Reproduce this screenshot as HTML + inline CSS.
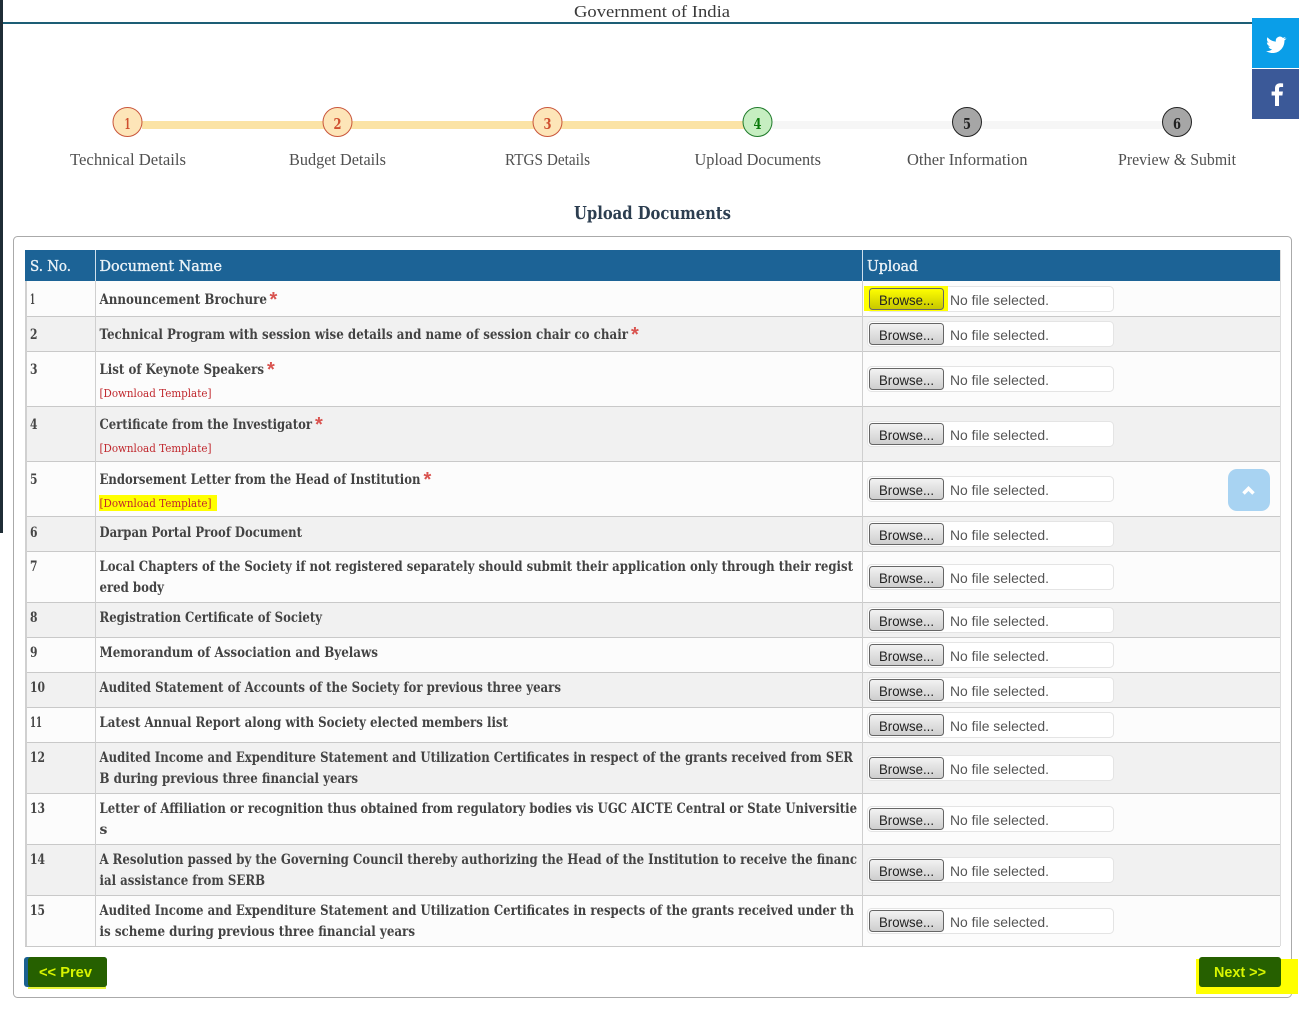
<!DOCTYPE html>
<html><head><meta charset="utf-8"><title>Upload Documents</title>
<style>
html,body{margin:0;padding:0;background:#fff;width:1299px;height:1030px;overflow:hidden}
svg{display:block;position:absolute;left:0;top:0}
.t{font-family:"DejaVu Serif","Liberation Serif",serif;font-weight:bold;font-size:14px;fill:#434343}
.l{font-family:"Liberation Serif",serif;font-size:17px;fill:#505050}
.h{font-family:"DejaVu Serif","Liberation Serif",serif;font-size:14.5px;fill:#eaf2f7;stroke:#eaf2f7;stroke-width:.35}
.d{font-family:"DejaVu Serif","Liberation Serif",serif;font-size:11px;fill:#c0272d}
.n{font-family:"DejaVu Serif","Liberation Serif",serif;font-weight:bold;font-size:14px}
.c{font-family:"DejaVu Serif","Liberation Serif",serif;font-weight:bold;font-size:15px}
.s{font-family:"Liberation Sans",sans-serif;font-weight:bold;font-size:20px;fill:#d9534f}
.b{font-family:"Liberation Sans",sans-serif;font-size:14px;fill:#222}
.f{font-family:"Liberation Sans",sans-serif;font-size:14px;fill:#555}
.g{font-family:"Liberation Sans",sans-serif;font-weight:bold;font-size:14.500px;fill:#d8f500}
.box{fill:#fff;stroke:#e4e4e4}
.btn{fill:url(#bg);stroke:#666}
</style></head><body>
<svg width="1299" height="1030" viewBox="0 0 1299 1030" xmlns="http://www.w3.org/2000/svg">
<defs>
<linearGradient id="bg" x1="0" y1="0" x2="0" y2="1"><stop offset="0" stop-color="#f3f3f3"/><stop offset="1" stop-color="#cdcdcd"/></linearGradient>
<linearGradient id="by" x1="0" y1="0" x2="0" y2="1"><stop offset="0" stop-color="#ffff00"/><stop offset="1" stop-color="#c6c600"/></linearGradient>
</defs>
<rect x="0" y="0" width="3" height="533" fill="#1f2d36"/>
<rect x="3" y="22" width="1249" height="2" fill="#1d5e75"/>
<text x="574" y="17" class="l" style="fill:#3a3a3a" textLength="156" lengthAdjust="spacingAndGlyphs">Government of India</text>

<rect x="1252" y="18" width="47" height="50" fill="#0a9ee8"/>
<rect x="1252" y="69" width="47" height="50" fill="#3b5998"/>
<path d="M1286 38.5c-.7.3-1.5.5-2.300.6.800-.500 1.500-1.300 1.800-2.200-.800.500-1.700.800-2.600 1a4.100 4.100 0 0 0-7 3.700c-3.400-.2-6.400-1.800-8.400-4.300-1.100 1.900-.5 4.300 1.300 5.500-.7 0-1.300-.2-1.900-.5 0 2 1.400 3.700 3.300 4.100-.6.200-1.200.2-1.800.1.500 1.600 2 2.800 3.800 2.800-1.800 1.400-4 2-6.100 1.800 1.900 1.200 4.100 1.900 6.400 1.900 7.800 0 12.200-6.600 11.900-12.500.8-.6 1.500-1.300 2.100-2z" fill="#fff"/>
<path d="M1279 106v-10.500h3.400l.5-4h-3.900v-2.600c0-1.200.3-1.900 2-1.900h2.100v-3.600c-.4 0-1.600-.2-3-.2-3 0-5.100 1.800-5.100 5.200v3.100h-3.400v4h3.400V106z" fill="#fff"/>

<rect x="142" y="121" width="610" height="8" fill="#fbe3a5"/>
<rect x="772" y="121" width="392" height="8" fill="#f6f6f6"/>
<circle cx="127.500" cy="122" r="14.500" fill="#fde5b8" stroke="#c9553a"/>
<circle cx="337.500" cy="122" r="14.500" fill="#fde5b8" stroke="#c9553a"/>
<circle cx="547.500" cy="122" r="14.500" fill="#fde5b8" stroke="#c9553a"/>
<circle cx="757.500" cy="122" r="14.500" fill="#c6eec1" stroke="#1f7a2a"/>
<circle cx="967" cy="122" r="14.500" fill="#a6a6a6" stroke="#222"/>
<circle cx="1177" cy="122" r="14.500" fill="#a6a6a6" stroke="#222"/>
<text x="124.500" y="129" class="c" fill="#cf4f2f" textLength="6" lengthAdjust="spacingAndGlyphs">1</text>
<text x="333.500" y="129" class="c" fill="#cf4f2f" textLength="8" lengthAdjust="spacingAndGlyphs">2</text>
<text x="543.500" y="129" class="c" fill="#cf4f2f" textLength="8" lengthAdjust="spacingAndGlyphs">3</text>
<text x="753.500" y="129" class="c" fill="#0a7a0a" textLength="8" lengthAdjust="spacingAndGlyphs">4</text>
<text x="963" y="129" class="c" fill="#222" textLength="8" lengthAdjust="spacingAndGlyphs">5</text>
<text x="1173" y="129" class="c" fill="#222" textLength="8" lengthAdjust="spacingAndGlyphs">6</text>
<text x="70" y="165" class="l" textLength="116" lengthAdjust="spacingAndGlyphs">Technical Details</text>
<text x="289" y="165" class="l" textLength="97" lengthAdjust="spacingAndGlyphs">Budget Details</text>
<text x="505" y="165" class="l" textLength="85" lengthAdjust="spacingAndGlyphs">RTGS Details</text>
<text x="694.500" y="165" class="l" textLength="126.500" lengthAdjust="spacingAndGlyphs">Upload Documents</text>
<text x="907" y="165" class="l" textLength="120.500" lengthAdjust="spacingAndGlyphs">Other Information</text>
<text x="1118" y="165" class="l" textLength="118" lengthAdjust="spacingAndGlyphs">Preview &amp; Submit</text>
<text x="574" y="219" class="t" style="font-size:18px;fill:#2c3e50" textLength="157" lengthAdjust="spacingAndGlyphs">Upload Documents</text>

<rect x="13.500" y="236.500" width="1278" height="761" rx="4" fill="#fff" stroke="#aaa"/>

<rect x="25" y="281" width="1255" height="35" fill="#fcfcfc"/>
<rect x="25" y="316" width="1255" height="35" fill="#f1f1f1"/>
<rect x="25" y="351" width="1255" height="55" fill="#fcfcfc"/>
<rect x="25" y="406" width="1255" height="55" fill="#f1f1f1"/>
<rect x="25" y="461" width="1255" height="55" fill="#fcfcfc"/>
<rect x="25" y="516" width="1255" height="35" fill="#f1f1f1"/>
<rect x="25" y="551" width="1255" height="51" fill="#fcfcfc"/>
<rect x="25" y="602" width="1255" height="35" fill="#f1f1f1"/>
<rect x="25" y="637" width="1255" height="35" fill="#fcfcfc"/>
<rect x="25" y="672" width="1255" height="35" fill="#f1f1f1"/>
<rect x="25" y="707" width="1255" height="35" fill="#fcfcfc"/>
<rect x="25" y="742" width="1255" height="51" fill="#f1f1f1"/>
<rect x="25" y="793" width="1255" height="51" fill="#fcfcfc"/>
<rect x="25" y="844" width="1255" height="51" fill="#f1f1f1"/>
<rect x="25" y="895" width="1255" height="51" fill="#fcfcfc"/>
<path d="M25 316.500H1280M25 351.500H1280M25 406.500H1280M25 461.500H1280M25 516.500H1280M25 551.500H1280M25 602.500H1280M25 637.500H1280M25 672.500H1280M25 707.500H1280M25 742.500H1280M25 793.500H1280M25 844.500H1280M25 895.500H1280M25 946.500H1280" stroke="#c9c9c9" fill="none"/>
<path d="M95.500 281V946M862.500 281V946" stroke="#cfcfcf" fill="none"/>
<path d="M26 250V946" stroke="#d0d0d0" stroke-width="2" fill="none"/>
<path d="M1280.500 250V946" stroke="#ddd" fill="none"/>
<rect x="25" y="250" width="1255" height="31" fill="#1c6396"/>
<path d="M95.500 250V281M862.500 250V281" stroke="#cfe0ec" fill="none"/>
<text x="30" y="271" class="h" textLength="41" lengthAdjust="spacingAndGlyphs">S. No.</text>
<text x="99.500" y="271" class="h" textLength="122.500" lengthAdjust="spacingAndGlyphs">Document Name</text>
<text x="867" y="271" class="h" textLength="51" lengthAdjust="spacingAndGlyphs">Upload</text>

<text x="30" y="304" class="n" fill="#454545" textLength="5" lengthAdjust="spacingAndGlyphs">1</text>
<text x="30" y="339" class="n" fill="#454545" textLength="7.500" lengthAdjust="spacingAndGlyphs">2</text>
<text x="30" y="374" class="n" fill="#454545" textLength="7.500" lengthAdjust="spacingAndGlyphs">3</text>
<text x="30" y="429" class="n" fill="#454545" textLength="7.500" lengthAdjust="spacingAndGlyphs">4</text>
<text x="30" y="484" class="n" fill="#454545" textLength="7.500" lengthAdjust="spacingAndGlyphs">5</text>
<text x="30" y="537" class="n" fill="#454545" textLength="7.500" lengthAdjust="spacingAndGlyphs">6</text>
<text x="30" y="571" class="n" fill="#454545" textLength="7.500" lengthAdjust="spacingAndGlyphs">7</text>
<text x="30" y="622" class="n" fill="#454545" textLength="7.500" lengthAdjust="spacingAndGlyphs">8</text>
<text x="30" y="657" class="n" fill="#454545" textLength="7.500" lengthAdjust="spacingAndGlyphs">9</text>
<text x="30" y="692" class="n" fill="#454545" textLength="15" lengthAdjust="spacingAndGlyphs">10</text>
<text x="30" y="727" class="n" fill="#454545" textLength="12" lengthAdjust="spacingAndGlyphs">11</text>
<text x="30" y="762" class="n" fill="#454545" textLength="15" lengthAdjust="spacingAndGlyphs">12</text>
<text x="30" y="813" class="n" fill="#454545" textLength="15" lengthAdjust="spacingAndGlyphs">13</text>
<text x="30" y="864" class="n" fill="#454545" textLength="15" lengthAdjust="spacingAndGlyphs">14</text>
<text x="30" y="915" class="n" fill="#454545" textLength="15" lengthAdjust="spacingAndGlyphs">15</text>

<text x="99.500" y="304" class="t" textLength="167.500" lengthAdjust="spacingAndGlyphs">Announcement Brochure</text>
<text x="269.500" y="306" class="s">*</text>
<text x="99.500" y="339" class="t" textLength="528.500" lengthAdjust="spacingAndGlyphs">Technical Program with session wise details and name of session chair co chair</text>
<text x="631" y="341" class="s">*</text>
<text x="99.500" y="374" class="t" textLength="164.500" lengthAdjust="spacingAndGlyphs">List of Keynote Speakers</text>
<text x="267" y="376" class="s">*</text>
<text x="99.500" y="397" class="d" textLength="112" lengthAdjust="spacingAndGlyphs">[Download Template]</text>
<text x="99.500" y="429" class="t" textLength="212.500" lengthAdjust="spacingAndGlyphs">Certificate from the Investigator</text>
<text x="315" y="431" class="s">*</text>
<text x="99.500" y="452" class="d" textLength="112" lengthAdjust="spacingAndGlyphs">[Download Template]</text>
<text x="99.500" y="484" class="t" textLength="321" lengthAdjust="spacingAndGlyphs">Endorsement Letter from the Head of Institution</text>
<text x="423.500" y="486" class="s">*</text>
<rect x="99" y="495" width="118" height="16" fill="#ffff00"/>
<text x="99.500" y="507" class="d" textLength="112" lengthAdjust="spacingAndGlyphs">[Download Template]</text>
<text x="99.500" y="537" class="t" textLength="202.500" lengthAdjust="spacingAndGlyphs">Darpan Portal Proof Document</text>
<text x="99.500" y="571" class="t" textLength="753.500" lengthAdjust="spacingAndGlyphs">Local Chapters of the Society if not registered separately should submit their application only through their regist</text>
<text x="99.500" y="592" class="t" textLength="64.500" lengthAdjust="spacingAndGlyphs">ered body</text>
<text x="99.500" y="622" class="t" textLength="222.500" lengthAdjust="spacingAndGlyphs">Registration Certificate of Society</text>
<text x="99.500" y="657" class="t" textLength="278.500" lengthAdjust="spacingAndGlyphs">Memorandum of Association and Byelaws</text>
<text x="99.500" y="692" class="t" textLength="461.500" lengthAdjust="spacingAndGlyphs">Audited Statement of Accounts of the Society for previous three years</text>
<text x="99.500" y="727" class="t" textLength="408.500" lengthAdjust="spacingAndGlyphs">Latest Annual Report along with Society elected members list</text>
<text x="99.500" y="762" class="t" textLength="753.500" lengthAdjust="spacingAndGlyphs">Audited Income and Expenditure Statement and Utilization Certificates in respect of the grants received from SER</text>
<text x="99.500" y="783" class="t" textLength="258.500" lengthAdjust="spacingAndGlyphs">B during previous three financial years</text>
<text x="99.500" y="813" class="t" textLength="757.500" lengthAdjust="spacingAndGlyphs">Letter of Affiliation or recognition thus obtained from regulatory bodies vis UGC AICTE Central or State Universitie</text>
<text x="99.500" y="834" class="t">s</text>
<text x="99.500" y="864" class="t" textLength="757.500" lengthAdjust="spacingAndGlyphs">A Resolution passed by the Governing Council thereby authorizing the Head of the Institution to receive the financ</text>
<text x="99.500" y="885" class="t" textLength="165.500" lengthAdjust="spacingAndGlyphs">ial assistance from SERB</text>
<text x="99.500" y="915" class="t" textLength="754.500" lengthAdjust="spacingAndGlyphs">Audited Income and Expenditure Statement and Utilization Certificates in respects of the grants received under th</text>
<text x="99.500" y="936" class="t" textLength="315.500" lengthAdjust="spacingAndGlyphs">is scheme during previous three financial years</text>

<rect class="box" x="867.500" y="286.500" width="246" height="25" rx="4"/>
<rect x="864" y="286" width="84" height="25" fill="#ffff00"/>
<rect x="869.500" y="288.500" width="74" height="21" rx="3" fill="url(#by)" stroke="#666"/>
<text x="879" y="305" class="b" textLength="55" lengthAdjust="spacingAndGlyphs">Browse...</text>
<text x="950" y="305" class="f" textLength="99" lengthAdjust="spacingAndGlyphs">No file selected.</text>

<rect class="box" x="867.500" y="321.500" width="246" height="25" rx="4"/><rect class="btn" x="869.500" y="323.500" width="74" height="21" rx="3"/>
<text x="879" y="340" class="b" textLength="55" lengthAdjust="spacingAndGlyphs">Browse...</text><text x="950" y="340" class="f" textLength="99" lengthAdjust="spacingAndGlyphs">No file selected.</text>
<rect class="box" x="867.500" y="366.500" width="246" height="25" rx="4"/><rect class="btn" x="869.500" y="368.500" width="74" height="21" rx="3"/>
<text x="879" y="385" class="b" textLength="55" lengthAdjust="spacingAndGlyphs">Browse...</text><text x="950" y="385" class="f" textLength="99" lengthAdjust="spacingAndGlyphs">No file selected.</text>
<rect class="box" x="867.500" y="421.500" width="246" height="25" rx="4"/><rect class="btn" x="869.500" y="423.500" width="74" height="21" rx="3"/>
<text x="879" y="440" class="b" textLength="55" lengthAdjust="spacingAndGlyphs">Browse...</text><text x="950" y="440" class="f" textLength="99" lengthAdjust="spacingAndGlyphs">No file selected.</text>
<rect class="box" x="867.500" y="476.500" width="246" height="25" rx="4"/><rect class="btn" x="869.500" y="478.500" width="74" height="21" rx="3"/>
<text x="879" y="495" class="b" textLength="55" lengthAdjust="spacingAndGlyphs">Browse...</text><text x="950" y="495" class="f" textLength="99" lengthAdjust="spacingAndGlyphs">No file selected.</text>
<rect class="box" x="867.500" y="521.500" width="246" height="25" rx="4"/><rect class="btn" x="869.500" y="523.500" width="74" height="21" rx="3"/>
<text x="879" y="540" class="b" textLength="55" lengthAdjust="spacingAndGlyphs">Browse...</text><text x="950" y="540" class="f" textLength="99" lengthAdjust="spacingAndGlyphs">No file selected.</text>
<rect class="box" x="867.500" y="564.500" width="246" height="25" rx="4"/><rect class="btn" x="869.500" y="566.500" width="74" height="21" rx="3"/>
<text x="879" y="583" class="b" textLength="55" lengthAdjust="spacingAndGlyphs">Browse...</text><text x="950" y="583" class="f" textLength="99" lengthAdjust="spacingAndGlyphs">No file selected.</text>
<rect class="box" x="867.500" y="607.500" width="246" height="25" rx="4"/><rect class="btn" x="869.500" y="609.500" width="74" height="21" rx="3"/>
<text x="879" y="626" class="b" textLength="55" lengthAdjust="spacingAndGlyphs">Browse...</text><text x="950" y="626" class="f" textLength="99" lengthAdjust="spacingAndGlyphs">No file selected.</text>
<rect class="box" x="867.500" y="642.500" width="246" height="25" rx="4"/><rect class="btn" x="869.500" y="644.500" width="74" height="21" rx="3"/>
<text x="879" y="661" class="b" textLength="55" lengthAdjust="spacingAndGlyphs">Browse...</text><text x="950" y="661" class="f" textLength="99" lengthAdjust="spacingAndGlyphs">No file selected.</text>
<rect class="box" x="867.500" y="677.500" width="246" height="25" rx="4"/><rect class="btn" x="869.500" y="679.500" width="74" height="21" rx="3"/>
<text x="879" y="696" class="b" textLength="55" lengthAdjust="spacingAndGlyphs">Browse...</text><text x="950" y="696" class="f" textLength="99" lengthAdjust="spacingAndGlyphs">No file selected.</text>
<rect class="box" x="867.500" y="712.500" width="246" height="25" rx="4"/><rect class="btn" x="869.500" y="714.500" width="74" height="21" rx="3"/>
<text x="879" y="731" class="b" textLength="55" lengthAdjust="spacingAndGlyphs">Browse...</text><text x="950" y="731" class="f" textLength="99" lengthAdjust="spacingAndGlyphs">No file selected.</text>
<rect class="box" x="867.500" y="755.500" width="246" height="25" rx="4"/><rect class="btn" x="869.500" y="757.500" width="74" height="21" rx="3"/>
<text x="879" y="774" class="b" textLength="55" lengthAdjust="spacingAndGlyphs">Browse...</text><text x="950" y="774" class="f" textLength="99" lengthAdjust="spacingAndGlyphs">No file selected.</text>
<rect class="box" x="867.500" y="806.500" width="246" height="25" rx="4"/><rect class="btn" x="869.500" y="808.500" width="74" height="21" rx="3"/>
<text x="879" y="825" class="b" textLength="55" lengthAdjust="spacingAndGlyphs">Browse...</text><text x="950" y="825" class="f" textLength="99" lengthAdjust="spacingAndGlyphs">No file selected.</text>
<rect class="box" x="867.500" y="857.500" width="246" height="25" rx="4"/><rect class="btn" x="869.500" y="859.500" width="74" height="21" rx="3"/>
<text x="879" y="876" class="b" textLength="55" lengthAdjust="spacingAndGlyphs">Browse...</text><text x="950" y="876" class="f" textLength="99" lengthAdjust="spacingAndGlyphs">No file selected.</text>
<rect class="box" x="867.500" y="908.500" width="246" height="25" rx="4"/><rect class="btn" x="869.500" y="910.500" width="74" height="21" rx="3"/>
<text x="879" y="927" class="b" textLength="55" lengthAdjust="spacingAndGlyphs">Browse...</text><text x="950" y="927" class="f" textLength="99" lengthAdjust="spacingAndGlyphs">No file selected.</text>

<rect x="1228" y="469" width="42" height="42" rx="9" fill="#a8d3f2"/>
<path d="M1243.500 493.500l5-5 5 5" fill="none" stroke="#fff" stroke-width="3.500"/>

<rect x="28" y="959" width="78" height="30" fill="#e8f53a"/>
<rect x="24" y="957" width="83" height="30" rx="3" fill="#1a6090"/>
<rect x="28" y="957" width="79" height="30" rx="3" fill="#266000"/>
<text x="39" y="977" class="g" textLength="53" lengthAdjust="spacingAndGlyphs">&lt;&lt; Prev</text>

<rect x="1196" y="959" width="102" height="35" fill="#ffff00"/>
<rect x="1199" y="957" width="82" height="30" rx="3" fill="#266000"/>
<text x="1214" y="977" class="g" textLength="52" lengthAdjust="spacingAndGlyphs">Next &gt;&gt;</text>
</svg>
</body></html>
